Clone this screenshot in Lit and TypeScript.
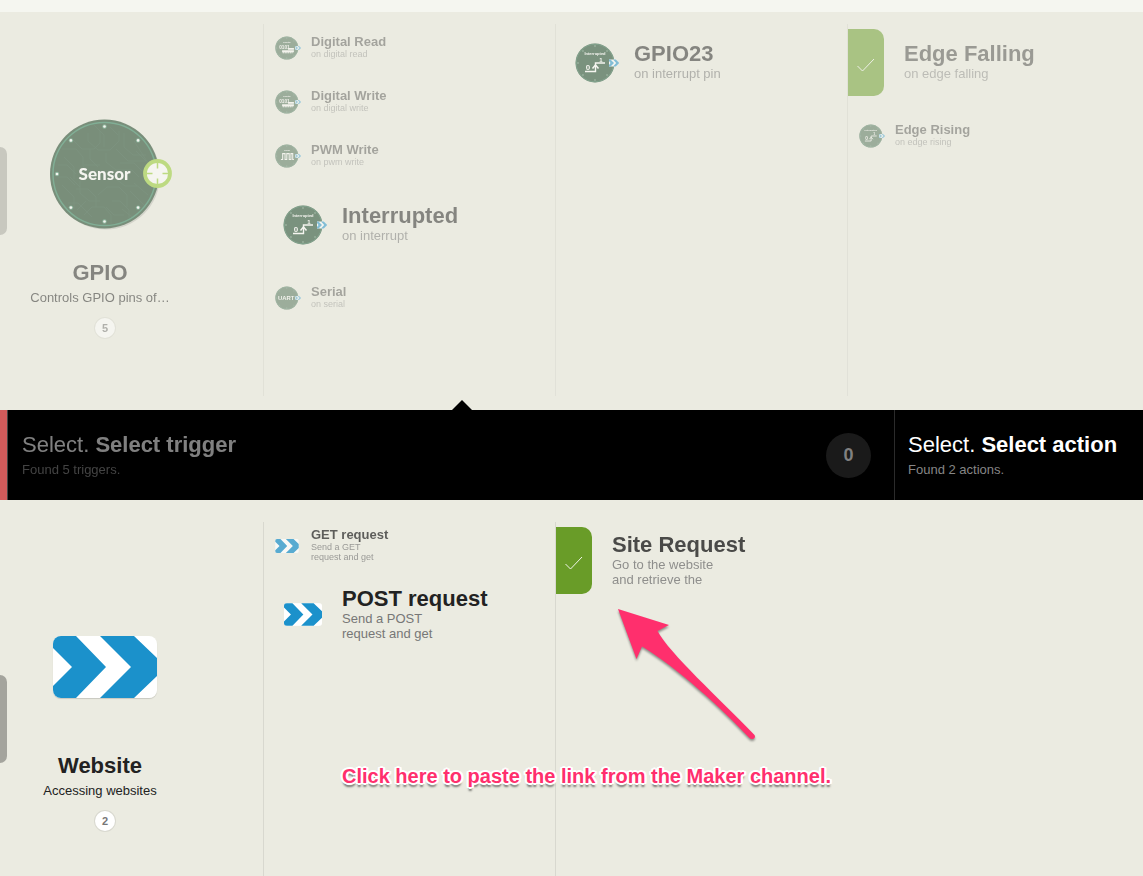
import { LitElement, html, svg, css, nothing } from "lit";
import { customElement, property } from "lit/decorators.js";

type Glyph = "digital" | "pwm" | "interrupt" | "uart" | "website" | "tag";

interface Entry {
  title: string;
  lines: string[];
  glyph: Glyph;
  large?: boolean;
}

const triggers: Entry[][] = [
  [
    { title: "Digital Read", lines: ["on digital read"], glyph: "digital" },
    { title: "Digital Write", lines: ["on digital write"], glyph: "digital" },
    { title: "PWM Write", lines: ["on pwm write"], glyph: "pwm" },
    { title: "Interrupted", lines: ["on interrupt"], glyph: "interrupt", large: true },
    { title: "Serial", lines: ["on serial"], glyph: "uart" },
  ],
  [{ title: "GPIO23", lines: ["on interrupt pin"], glyph: "interrupt", large: true }],
  [
    { title: "Edge Falling", lines: ["on edge falling"], glyph: "tag", large: true },
    { title: "Edge Rising", lines: ["on edge rising"], glyph: "interrupt" },
  ],
];

const actions: Entry[][] = [
  [
    { title: "GET request", lines: ["Send a GET", "request and get"], glyph: "website" },
    { title: "POST request", lines: ["Send a POST", "request and get"], glyph: "website", large: true },
  ],
  [{ title: "Site Request", lines: ["Go to the website", "and retrieve the"], glyph: "tag", large: true }],
  [],
];

const websiteLogo = html`
  <svg class="website" viewBox="0 0 104 62" aria-hidden="true">
    <rect width="104" height="62" fill="#fff" />
    <path fill="#1b91cb" d="M0 0H23L53 31L23 62H0V50L19 31L0 12Z M47 0H81L104 22V40L81 62H47L78 31Z" />
  </svg>
`;

const polar = (cx: number, cy: number, r: number, step: number) => {
  const a = (step * Math.PI) / 4;
  return [cx + r * Math.cos(a), cy + r * Math.sin(a)];
};

const inner = (glyph: Glyph) => {
  if (glyph === "digital")
    return svg`
      <text class="mini" x="20" y="11" font-size="4">Digital</text>
      <text class="mini" x="16" y="21" font-size="8">0101</text>
      <path d="M22 20h10v3H22z M12 24h20v3H12z" fill="#fff" />
      <path d="M13 28h17" stroke="#fff" stroke-width="2" stroke-dasharray="3 1" />`;
  if (glyph === "pwm")
    return svg`
      <text class="mini" x="20" y="11" font-size="4">PWM</text>
      <path d="M10 26h3V16h4v10h3V16h4v10h3V16h3v10h2" fill="none" stroke="#fff" stroke-width="1.800" />`;
  if (glyph === "uart") return svg`<text class="mini" x="19" y="24" font-size="10">UART</text>`;
  return svg`
    <text class="mini" x="20" y="12" font-size="4">Interrupted</text>
    <text class="mini" x="13" y="27" font-size="8">0</text>
    <text class="mini" x="26" y="19" font-size="6">1</text>
    <path d="M10 28.500h10.500V20H30" fill="none" stroke="#fff" stroke-width="1.400" />
    <path d="M17.500 25.500L20.500 22L23.500 25.500" fill="none" stroke="#fff" stroke-width="1.500" />`;
};

const disc = (glyph: Glyph) => html`
  <svg class="disc" viewBox="0 0 44 40" aria-hidden="true">
    <circle cx="20" cy="20" r="19.500" fill="#0c3b1d" />
    <circle cx="20" cy="20" r="18.800" fill="none" stroke="#1d5f3e" stroke-width="1" />
    ${[0, 1, 2, 3, 4, 5, 6, 7].map((i) => {
      const [x, y] = polar(20, 20, 17, i);
      return svg`<circle cx=${x} cy=${y} r="0.800" fill="#6b9c80" />`;
    })}
    ${inner(glyph)}
    <path d="M34 16.500h7l3 3.500l-3 3.500h-7z" fill="#fff" />
    <path d="M34 16.500h1.500l3.500 3.500l-3.500 3.500H34v-1.500l1.500-2l-1.500-2z M38 16.500h2.800l3.500 3.500l-3.500 3.500H38l3.200-3.500z" fill="#1b91cb" />
  </svg>
`;

const sensor = html`
  <svg class="sensor" viewBox="0 0 110 110" aria-hidden="true">
    <circle cx="56" cy="56.500" r="54" fill="#000" opacity="0.2" />
    <circle cx="54.500" cy="55" r="54.500" fill="#093315" />
    <g fill="none" stroke="#123f22" stroke-width="0.800">
      <path d="M12 30h14l7 8v9l8 7M8 46h9l9 9M22 20l10 10h12l6-6V12M38 14v8l10 9h12l9-9V12M66 30l12 12h18M74 14v14l9 8h13M84 22l14 22M56 34v9l10 8h16l7 7M30 62v12l9 8h11M12 66l12 12v12M18 84h10l14 14M34 96l8-8h12l7 8v9M48 76l9-8h12l8 8v12M62 82h8l9 9v8M84 64l14 12M80 72l14 14M72 90l10 8M8 58h9l8 8M40 30v10l8 8M34 46h16M66 60l9 7h12M26 70h12l8 8v10" />
      <path d="M14 38l10 10v12M44 6l10 10v12M60 8l8 8M86 32l10 10M70 44h14l8 8M36 82l-9 9M56 88l8 8h10M20 58l10 10" />
    </g>
    <circle cx="54.500" cy="55" r="51.500" fill="none" stroke="#19734b" stroke-width="1.500" />
    ${[0, 1, 2, 3, 4, 5, 6, 7].map((i) => {
      const [x, y] = polar(54.5, 55, 47.5, i);
      return svg`<circle cx=${x} cy=${y} r="2.200" fill="#2f8059" /><circle cx=${x} cy=${y} r="1.300" fill="#fff" />`;
    })}
    <text class="label" x="54.500" y="61">Sensor</text>
    <circle cx="107.500" cy="54.500" r="12.500" fill="#fff" stroke="#91cb25" stroke-width="3.800" />
    <path d="M107.500 43v6.500M107.500 59.500v6.500M96 54.500h6.500M112.500 54.500h6.500" stroke="#91cb25" stroke-width="1.500" />
  </svg>
`;

const tag = html`
  <span class="tag">
    <svg viewBox="0 0 18 14" width="18" height="14" aria-hidden="true">
      <path d="M0.500 8L5.500 13L17 1" fill="none" stroke="#fff" stroke-width="0.900" />
    </svg>
  </span>
`;

@customElement("recipe-panel")
export class RecipePanel extends LitElement {
  @property() name = "";
  @property() about = "";
  @property({ type: Number }) count = 0;
  @property({ type: Boolean }) website = false;
  @property({ attribute: false }) columns: Entry[][] = [];

  static styles = css`
    :host {
      position: relative;
      display: grid;
      grid-template-columns: 264fr 292fr 292fr 295fr;
      font-family: "Liberation Sans", Arial, Helvetica, sans-serif;
      color: #222;
    }
    button {
      font: inherit;
      color: inherit;
      background: none;
      border: 0;
      padding: 0;
      margin: 0;
      text-align: left;
      cursor: pointer;
    }
    .handle {
      position: absolute;
      left: 0;
      top: var(--handle-top);
      width: 7px;
      height: 88px;
      border-radius: 0 8px 8px 0;
      background: rgba(0, 0, 0, 0.3);
    }
    .channel {
      width: 210px;
      padding-top: var(--channel-top);
      display: flex;
      flex-direction: column;
      align-items: center;
    }
    .art {
      height: 110px;
      display: flex;
      align-items: center;
    }
    .sensor {
      display: block;
      width: 110px;
      height: 110px;
      overflow: visible;
    }
    .label,
    .mini {
      font-family: "Liberation Sans", Arial, sans-serif;
      font-weight: bold;
      text-anchor: middle;
      fill: #fff;
    }
    .label {
      font-family: Lato, "Open Sans", sans-serif;
      font-weight: 900;
      font-size: 17px;
    }
    .website {
      display: block;
      overflow: hidden;
    }
    .art .website {
      width: 104px;
      height: 62px;
      border-radius: 8px;
      box-shadow: 0 1px 1px rgba(0, 0, 0, 0.15);
    }
    h2 {
      margin: 30px 10px 0 0;
      font-size: 22px;
      line-height: 28px;
      font-weight: bold;
    }
    .about {
      margin: 2px 10px 0 0;
      font-size: 13px;
      line-height: 18px;
    }
    .count {
      width: 20px;
      height: 20px;
      margin-top: 11px;
      border-radius: 50%;
      background: #fff;
      box-shadow: 0 0 0 1px rgba(0, 0, 0, 0.08);
      color: #777;
      font-size: 11px;
      line-height: 20px;
      font-weight: bold;
      text-align: center;
    }
    .column {
      display: flex;
      flex-direction: column;
      border-left: 1px solid #d8d8cf;
      margin-left: -1px;
    }
    .column.empty {
      border-color: transparent;
    }
    .entry {
      display: grid;
      grid-template-columns: 36px 1fr;
      align-items: center;
      height: 48px;
      margin-bottom: 6px;
      padding-left: 11px;
      opacity: 0.7;
    }
    .entry.large {
      grid-template-columns: 59px 1fr;
      height: 77px;
      margin-bottom: 11px;
      padding-left: 19px;
      opacity: 1;
    }
    .entry.tagged {
      grid-template-columns: 56px 1fr;
      padding-left: 0;
    }
    .disc {
      display: block;
      width: 26px;
      height: 24px;
    }
    .large .disc {
      width: 44px;
      height: 40px;
    }
    .entry .website {
      width: 24px;
      height: 14px;
      border-radius: 2px;
    }
    .large .website {
      width: 38px;
      height: 23px;
      margin-left: 1px;
      border-radius: 3px;
    }
    .tag {
      display: flex;
      align-items: center;
      justify-content: center;
      width: 36px;
      height: 67px;
      border-radius: 0 10px 10px 0;
      background: #699c28;
    }
    .tag svg {
      margin-top: 4px;
    }
    .text {
      display: block;
    }
    .tagged .text {
      opacity: 0.8;
    }
    .title {
      display: block;
      font-size: 13px;
      line-height: 14px;
      font-weight: bold;
    }
    .sub {
      display: block;
      padding-bottom: 2px;
      font-size: 9px;
      line-height: 10px;
      color: #777;
      white-space: pre-line;
    }
    .large .title {
      font-size: 22px;
      line-height: 24px;
    }
    .large .sub {
      font-size: 13px;
      line-height: 15px;
    }
  `;

  private entry(e: Entry) {
    const art = e.glyph === "tag" ? tag : e.glyph === "website" ? websiteLogo : disc(e.glyph);
    return html`
      <button class="entry ${e.large ? "large" : ""} ${e.glyph === "tag" ? "tagged" : ""}">
        ${art}
        <span class="text">
          <span class="title">${e.title}</span>
          <span class="sub">${e.lines.join("\n")}</span>
        </span>
      </button>
    `;
  }

  render() {
    return html`
      <div class="channel">
        <div class="art">${this.website ? websiteLogo : sensor}</div>
        <h2>${this.name}</h2>
        <p class="about">${this.about}</p>
        <span class="count">${this.count}</span>
      </div>
      ${this.columns.map(
        (c) => html`<div class="column ${c.length ? "" : "empty"}">${c.length ? c.map((e) => this.entry(e)) : nothing}</div>`
      )}
      <button class="handle" aria-label="Show more channels"></button>
    `;
  }
}

@customElement("app-root")
export class AppRoot extends LitElement {
  static styles = css`
    :host {
      display: flex;
      flex-direction: column;
      min-height: 100vh;
      overflow: hidden;
      background: #ebebe1;
      font-family: "Liberation Sans", Arial, Helvetica, sans-serif;
    }
    .strip {
      height: 12px;
      background: #f5f6f0;
    }
    .triggers {
      margin: 12px 0 14px;
      min-height: 372px;
      opacity: 0.5;
      --channel-top: 95px;
      --handle-top: 123px;
    }
    .lower {
      position: relative;
      flex: 1;
      display: flex;
      padding-top: 22px;
    }
    .actions {
      flex: 1;
      --channel-top: 90px;
      --handle-top: 153px;
    }
    .bar {
      position: relative;
      display: flex;
      height: 90px;
      background: #000;
      color: #fff;
    }
    .notch {
      position: absolute;
      left: 452px;
      bottom: 100%;
      width: 20px;
      height: 10px;
      background: #000;
      clip-path: polygon(50% 0, 100% 100%, 0 100%);
    }
    .edge {
      width: 7px;
      background: #d15b5b;
      border-right: 1px solid #444;
    }
    .step {
      padding: 21px 0 0 14px;
      white-space: nowrap;
    }
    .trigger {
      flex: 1;
      opacity: 0.5;
    }
    .action {
      width: 235px;
      border-left: 1px solid #2b2b2b;
      padding-left: 13px;
    }
    h1 {
      margin: 0;
      font-size: 22px;
      line-height: 28px;
      font-weight: normal;
    }
    .found {
      margin: 2px 0 0;
      font-size: 13px;
      line-height: 18px;
      color: #868686;
    }
    .total {
      align-self: center;
      width: 45px;
      height: 45px;
      margin-right: 23px;
      border-radius: 50%;
      background: #1a1a1a;
      color: #808080;
      font-size: 18px;
      line-height: 45px;
      font-weight: bold;
      text-align: center;
    }
    .pointer {
      position: absolute;
      left: 610px;
      top: 100px;
      filter: drop-shadow(0 2px 1px rgba(0, 0, 0, 0.4));
      pointer-events: none;
    }
    .note {
      position: absolute;
      left: 342px;
      top: 264px;
      margin: 0;
      font-size: 20px;
      line-height: 24px;
      font-weight: bold;
      color: #ff2f6d;
      white-space: nowrap;
      text-shadow: 2px 0 #fff, -2px 0 #fff, 0 2px #fff, 0 -2px #fff, 1px 1px #fff, -1px 1px #fff,
        1px -1px #fff, -1px -1px #fff, 2px 1px #fff, -2px 1px #fff, 2px -1px #fff, -2px -1px #fff,
        0 4px 2px rgba(0, 0, 0, 0.5);
    }
  `;

  render() {
    return html`
      <div class="strip"></div>
      <recipe-panel class="triggers" name="GPIO" about="Controls GPIO pins of…" .count=${5} .columns=${triggers}></recipe-panel>
      <header class="bar">
        <span class="notch"></span>
        <div class="edge"></div>
        <div class="step trigger">
          <h1>Select. <b>Select trigger</b></h1>
          <p class="found">Found 5 triggers.</p>
        </div>
        <span class="total">0</span>
        <div class="step action">
          <h1>Select. <b>Select action</b></h1>
          <p class="found">Found 2 actions.</p>
        </div>
      </header>
      <section class="lower">
        <recipe-panel class="actions" name="Website" about="Accessing websites" website .count=${2} .columns=${actions}></recipe-panel>
        <svg class="pointer" width="150" height="146" viewBox="0 0 150 146" aria-hidden="true">
          <path
            fill="#ff2f6d"
            d="M8 9L59 25L47.500 31C60 54 108 97 144.500 135Q146 138 143 139Q141 139.500 139 137.500C112 109 68 68 32 46.500L26.500 59Z"
          />
        </svg>
        <p class="note">Click here to paste the link from the Maker channel.</p>
      </section>
    `;
  }
}
